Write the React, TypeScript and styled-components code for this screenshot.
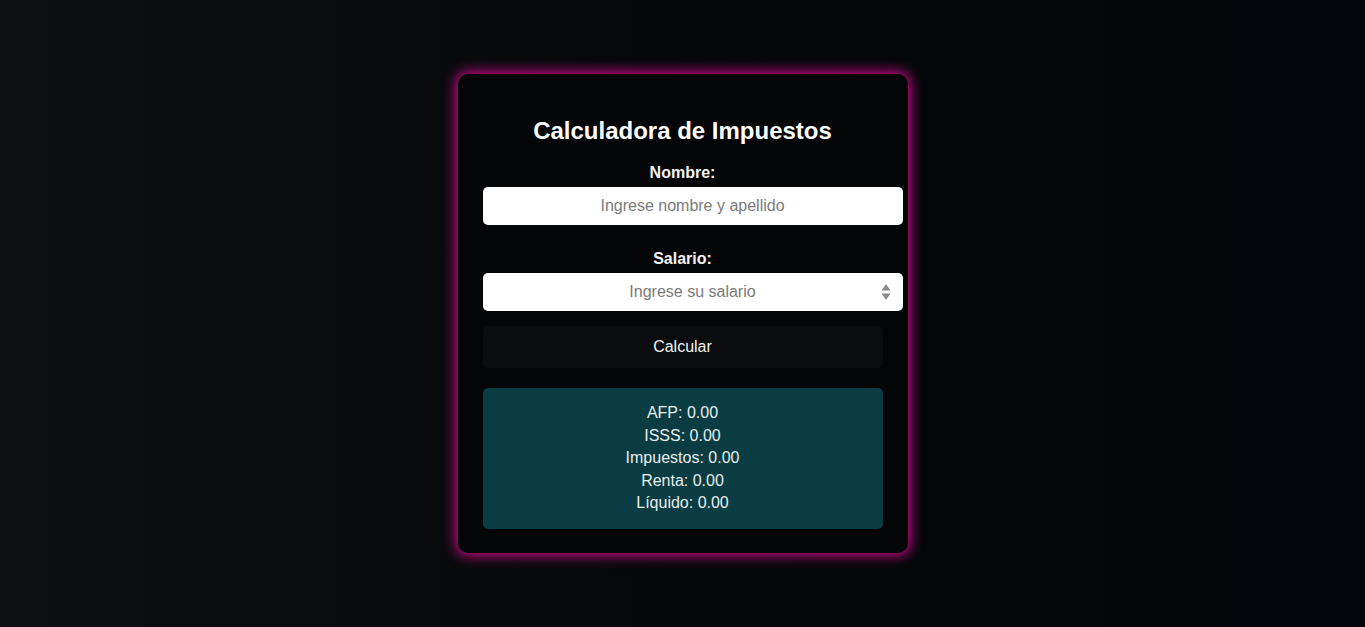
import { useState } from 'react';
import styled, { createGlobalStyle } from 'styled-components';

const GlobalStyle = createGlobalStyle`
    html, body {
        margin: 0;
        padding: 0;
    }
    body {
        font-family: "Liberation Sans", Arial, sans-serif;
        background: linear-gradient(to right, #0e0f11 0%, #06080a 50%, #020509 100%);
        min-height: 100vh;
    }
`;

const Page = styled.div`
    min-height: 100vh;
    display: flex;
    align-items: center;
    justify-content: center;
`;

const Card = styled.div`
    width: 450px;
    box-sizing: border-box;
    padding: 25px 25px 24px;
    background-color: #040507;
    border-radius: 10px;
    box-shadow: 0 0 13px 2px #d80a92;
    color: white;
`;

const Title = styled.h2`
    margin: 18px 0 19px;
    font-size: 24px;
    line-height: 28px;
    font-weight: bold;
    text-align: center;
`;

const Group = styled.div<{ $gap: number }>`
    margin-bottom: ${({ $gap }) => $gap}px;
`;

const Label = styled.label`
    display: block;
    margin-bottom: 5px;
    font-size: 16px;
    line-height: 18px;
    font-weight: bold;
    text-align: center;
    color: #f4f4f4;
`;

const InputWrap = styled.div`
    position: relative;
`;

const Input = styled.input`
    display: block;
    width: 100%;
    padding: 10px;
    border: none;
    border-radius: 5px;
    background: white;
    font-family: "Liberation Sans", Arial, sans-serif;
    font-size: 16px;
    line-height: 18px;
    height: 18px;
    text-align: center;
    color: #222;
    outline: none;

    &::placeholder {
        color: #7a7a7a;
    }

    &::-webkit-inner-spin-button,
    &::-webkit-outer-spin-button {
        -webkit-appearance: none;
        margin: 0;
    }
    -moz-appearance: textfield;
`;

const Spinner = styled.svg`
    position: absolute;
    right: -8px;
    top: 50%;
    transform: translateY(-50%);
    pointer-events: none;
`;

const CalcButton = styled.button`
    display: block;
    width: 100%;
    padding: 12px;
    border: none;
    border-radius: 5px;
    background-color: #0a0c0e;
    color: #f2f2f2;
    font-family: "Liberation Sans", Arial, sans-serif;
    font-size: 16px;
    line-height: 18px;
    cursor: pointer;
`;

const Results = styled.div`
    margin-top: 20px;
    padding: 14px;
    border-radius: 5px;
    background-color: #093c43;
    color: #e8eeee;
    font-size: 16px;
    line-height: 22.5px;
    text-align: center;
`;

const Line = styled.div``;

export default function App() {
    const [nombre, setNombre] = useState('');
    const [salario, setSalario] = useState('');
    const [res, setRes] = useState({ afp: 0, isss: 0, impuestos: 0, renta: 0, liquido: 0 });

    const calcular = () => {
        const s = parseFloat(salario) || 0;
        const afp = s * 0.0725;
        const isss = s * 0.03;
        const renta = Math.max(0, (s - afp - isss - 472) * 0.1);
        const impuestos = afp + isss + renta;
        setRes({ afp, isss, impuestos, renta, liquido: s - impuestos });
    };

    return (
        <Page>
            <GlobalStyle />
            <Card>
                <Title>Calculadora de Impuestos</Title>
                <Group $gap={25}>
                    <Label htmlFor="nombre">Nombre:</Label>
                    <Input
                        id="nombre"
                        type="text"
                        placeholder="Ingrese nombre y apellido"
                        value={nombre}
                        onChange={(e) => setNombre(e.target.value)}
                    />
                </Group>
                <Group $gap={15}>
                    <Label htmlFor="salario">Salario:</Label>
                    <InputWrap>
                        <Input
                            id="salario"
                            type="number"
                            placeholder="Ingrese su salario"
                            value={salario}
                            onChange={(e) => setSalario(e.target.value)}
                        />
                        <Spinner width="10" height="18" viewBox="0 0 10 18">
                            <path d="M5 1 L9 6.8 Q9.4 7.6 8.4 7.6 H1.6 Q0.6 7.6 1 6.8 Z" fill="#8a8a8a" />
                            <path d="M5 17 L9 11.2 Q9.4 10.4 8.4 10.4 H1.6 Q0.6 10.4 1 11.2 Z" fill="#8a8a8a" />
                        </Spinner>
                    </InputWrap>
                </Group>
                <CalcButton onClick={calcular}>Calcular</CalcButton>
                <Results>
                    <Line>AFP: {res.afp.toFixed(2)}</Line>
                    <Line>ISSS: {res.isss.toFixed(2)}</Line>
                    <Line>Impuestos: {res.impuestos.toFixed(2)}</Line>
                    <Line>Renta: {res.renta.toFixed(2)}</Line>
                    <Line>Líquido: {res.liquido.toFixed(2)}</Line>
                </Results>
            </Card>
        </Page>
    );
}
